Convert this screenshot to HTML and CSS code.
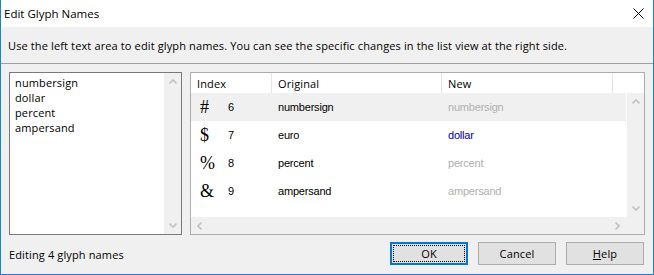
FILE: index.html
```html
<!DOCTYPE html>
<html>
<head>
<meta charset="utf-8">
<link rel="stylesheet" href="styles.css">
</head>
<body>
<div class="window">
  <div class="titlebar">
    <span class="title">Edit Glyph Names</span>
    <svg class="close" width="11" height="11" viewBox="0 0 11 11"><path d="M0.5 0.5 L10.5 10.5 M10.5 0.5 L0.5 10.5" stroke="#000" stroke-width="1" fill="none"/></svg>
  </div>
  <div class="info">Use the left text area to edit glyph names. You can see the specific changes in the list view at the right side.</div>
  <div class="content">
    <div class="editor">
      <div class="editor-text">numbersign<br>dollar<br>percent<br>ampersand</div>
      <div class="vscroll">
        <div class="arrow"><svg width="8" height="5" viewBox="0 0 8 5"><path d="M0.5 4.5 L4 1 L7.5 4.5" stroke="#c2c2c2" stroke-width="1.6" fill="none"/></svg></div>
        <div class="arrow"><svg width="8" height="5" viewBox="0 0 8 5"><path d="M0.5 0.5 L4 4 L7.5 0.5" stroke="#c2c2c2" stroke-width="1.6" fill="none"/></svg></div>
      </div>
    </div>
    <div class="listview">
      <div class="lv-header">
        <div class="hcell col-index">Index</div>
        <div class="hcell col-orig">Original</div>
        <div class="hcell col-new">New</div>
        <div class="hcell col-fill"></div>
      </div>
      <div class="lv-main">
        <div class="lv-rows">
          <div class="row row-hot">
            <div class="cell col-index"><span class="glyph">#</span><span class="num">6</span></div>
            <div class="cell col-orig">numbersign</div>
            <div class="cell col-new same">numbersign</div>
          </div>
          <div class="row">
            <div class="cell col-index"><span class="glyph">$</span><span class="num">7</span></div>
            <div class="cell col-orig">euro</div>
            <div class="cell col-new changed">dollar</div>
          </div>
          <div class="row">
            <div class="cell col-index"><span class="glyph">%</span><span class="num">8</span></div>
            <div class="cell col-orig">percent</div>
            <div class="cell col-new same">percent</div>
          </div>
          <div class="row">
            <div class="cell col-index"><span class="glyph">&amp;</span><span class="num">9</span></div>
            <div class="cell col-orig">ampersand</div>
            <div class="cell col-new same">ampersand</div>
          </div>
        </div>
        <div class="vscroll">
          <div class="arrow"><svg width="8" height="5" viewBox="0 0 8 5"><path d="M0.5 4.5 L4 1 L7.5 4.5" stroke="#c2c2c2" stroke-width="1.6" fill="none"/></svg></div>
          <div class="arrow"><svg width="8" height="5" viewBox="0 0 8 5"><path d="M0.5 0.5 L4 4 L7.5 0.5" stroke="#c2c2c2" stroke-width="1.6" fill="none"/></svg></div>
        </div>
      </div>
      <div class="lv-hbar">
        <div class="hscroll">
          <div class="harrow"><svg width="5" height="8" viewBox="0 0 5 8"><path d="M4.5 0.5 L1 4 L4.5 7.5" stroke="#c2c2c2" stroke-width="1.6" fill="none"/></svg></div>
          <div class="harrow"><svg width="5" height="8" viewBox="0 0 5 8"><path d="M0.5 0.5 L4 4 L0.5 7.5" stroke="#c2c2c2" stroke-width="1.6" fill="none"/></svg></div>
        </div>
        <div class="corner"></div>
      </div>
    </div>
  </div>
  <div class="footer">
    <span class="status">Editing 4 glyph names</span>
    <div class="buttons">
      <button class="btn btn-default"><span>OK</span></button>
      <button class="btn">Cancel</button>
      <button class="btn"><u>H</u>elp</button>
    </div>
  </div>
</div>
</body>
</html>
```
FILE: styles.css
```css
* { box-sizing: border-box; }
html, body { margin: 0; padding: 0; background: #f0f0f0; }
body {
  font-family: "Open Sans", "Noto Sans", sans-serif;
  font-size: 11px;
  letter-spacing: 0.13px;
  color: #000;
}
.window {
  width: 654px;
  height: 275px;
  border: 1px solid #1883d7;
  border-top: none;
  background: #f0f0f0;
  display: flex;
  flex-direction: column;
}
.titlebar {
  height: 27px;
  background: #fff;
  display: flex;
  align-items: center;
  justify-content: space-between;
  padding: 0 9px 0 3px;
  flex: none;
}
.title { font-size: 11.5px; letter-spacing: 0; }
.close { display: block; margin-top: -1px; }
.info {
  height: 37px;
  flex: none;
  display: flex;
  align-items: center;
  padding-left: 7px;
  border-bottom: 1px solid #a0a0a0;
}
.content {
  flex: none;
  display: flex;
  gap: 8px;
  padding: 8px 8px 0 8px;
  height: 171px;
}
.editor {
  width: 173px;
  height: 163px;
  border: 1px solid #7a7a7a;
  background: #fff;
  display: flex;
}
.editor-text {
  flex: 1;
  padding: 2px 0 0 5px;
  line-height: 15px;
}
.vscroll {
  width: 17px;
  background: #f0f0f0;
  display: flex;
  flex-direction: column;
  justify-content: space-between;
  flex: none;
}
.arrow {
  height: 17px;
  display: flex;
  align-items: center;
  justify-content: center;
}
.arrow svg, .harrow svg { display: block; }
.listview {
  width: 455px;
  height: 163px;
  border: 1px solid #adadad;
  background: #fff;
  display: flex;
  flex-direction: column;
}
.lv-header {
  height: 20px;
  display: flex;
  flex: none;
}
.hcell {
  height: 20px;
  display: flex;
  align-items: center;
  padding-left: 6px;
  border-right: 1px solid #e5e5e5;
}
.col-index { width: 81px; }
.col-orig { width: 170px; }
.col-new { width: 171px; }
.hcell.col-fill { flex: 1; border-right: none; }
.lv-main {
  flex: 1;
  display: flex;
}
.lv-rows {
  flex: 1;
  padding-right: 1px;
}
.row {
  height: 28px;
  display: flex;
  align-items: center;
  font-family: "Liberation Sans", Arial, sans-serif;
  font-size: 11px;
  letter-spacing: -0.2px;
}
.row-hot { background: #f0f0f0; }
.cell {
  height: 28px;
  display: flex;
  align-items: center;
  padding-left: 6px;
}
.row .col-index { padding-left: 9px; }
.glyph {
  width: 28px;
  font-family: "Liberation Serif", "Times New Roman", serif;
  font-size: 18px;
  letter-spacing: 0;
}
.same { color: #b0b0b0; }
.changed { color: #0000b0; }
.lv-hbar {
  height: 17px;
  display: flex;
  flex: none;
}
.hscroll {
  flex: 1;
  background: #f0f0f0;
  display: flex;
  justify-content: space-between;
  padding-right: 1px;
}
.harrow {
  width: 17px;
  display: flex;
  align-items: center;
  justify-content: center;
}
.corner { width: 17px; background: #f0f0f0; }
.footer {
  flex: 1;
  display: flex;
  align-items: flex-start;
  justify-content: space-between;
  padding: 7px 9px 0 8px;
}
.status {
  line-height: 23px;
  margin-top: 1px;
}
.buttons { display: flex; gap: 10px; }
.btn {
  width: 78px;
  height: 23px;
  background: #e1e1e1;
  border: 1px solid #adadad;
  font-family: "Open Sans", "Noto Sans", sans-serif;
  font-size: 11px;
  letter-spacing: 0.13px;
  color: #000;
  padding: 0;
  margin: 0;
  display: flex;
  align-items: center;
  justify-content: center;
}
.btn-default {
  border: 2px solid #0078d7;
  position: relative;
}
.btn-default::after {
  content: "";
  position: absolute;
  inset: 1px;
  border: 1px dotted #000;
}
```
